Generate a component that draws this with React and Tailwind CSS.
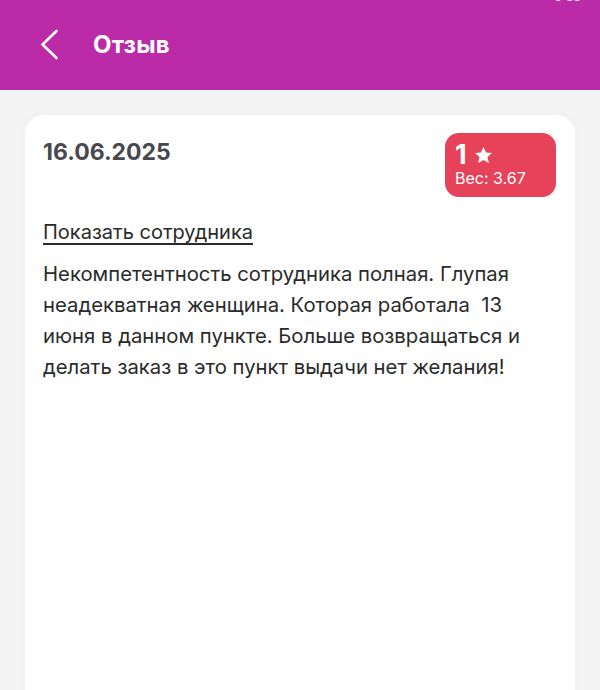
export default function App() {
  return (
    <div className="relative w-[600px] h-[690px] overflow-hidden bg-[#f4f4f4]" style={{ fontFamily: 'Inter, "Noto Sans", sans-serif' }}>
      <div className="absolute right-[10px] top-[-12px] text-[12px] text-white/90 font-semibold">5:33 •</div>
      <div className="h-[90px] bg-[#bb2ba7] flex items-center pl-[39px] pb-[1px]">
        <svg width="22" height="34" viewBox="0 0 22 34" fill="none">
          <path d="M17.5 3 L3.5 16.5 L17.5 30" stroke="white" strokeWidth="2.6" strokeLinecap="round" strokeLinejoin="round" />
        </svg>
        <div className="ml-[32px] text-white text-[24px] font-bold tracking-[0.2px]">Отзыв</div>
      </div>
      <div className="mx-[25px] mt-[25px] h-[700px] bg-white rounded-[18px] shadow-[0_0_12px_rgba(0,0,0,0.04)] pl-[18px] pr-[19px] pt-[18px]">
        <div className="flex justify-between items-start">
          <div className="text-[23px] font-bold text-[#48484d] leading-[30px] mt-[4px]">16.06.2025</div>
          <div className="w-[111px] h-[64px] rounded-[14px] bg-[#e6425a] text-white pl-[10px] pt-[8px]">
            <div className="flex items-center gap-[6px] leading-[28px]">
              <span className="text-[27px] font-bold">1</span>
              <svg width="21" height="21" viewBox="0 0 24 24" fill="white">
                <path d="M12 2.2l2.9 6.3 6.8.7-5.1 4.6 1.5 6.8L12 17.1l-6.1 3.5 1.5-6.8-5.1-4.6 6.8-.7z" />
              </svg>
            </div>
            <div className="text-[16px] leading-[18px]">Вес: 3.67</div>
          </div>
        </div>
        <div className="mt-[21px] text-[20px] text-[#2a2a2a] underline underline-offset-[4px] decoration-[1.5px] leading-[28px]">Показать сотрудника</div>
        <div className="mt-[12px] text-[20.3px] text-[#2a2a2a] leading-[31px] w-[512px]">
          Некомпетентность сотрудника полная. Глупая неадекватная женщина. Которая работала&nbsp; 13 июня в данном пункте. Больше возвращаться и делать заказ в это пункт выдачи нет желания!
        </div>
      </div>
    </div>
  );
}
